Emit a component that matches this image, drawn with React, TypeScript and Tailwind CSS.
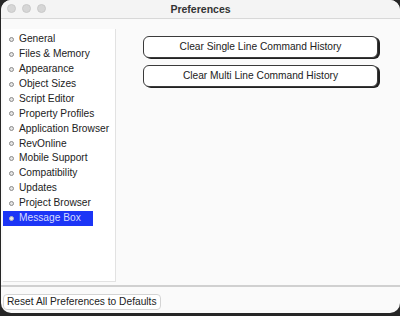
import React from 'react';

const items = [
  'General',
  'Files & Memory',
  'Appearance',
  'Object Sizes',
  'Script Editor',
  'Property Profiles',
  'Application Browser',
  'RevOnline',
  'Mobile Support',
  'Compatibility',
  'Updates',
  'Project Browser',
  'Message Box',
];

const selected = 'Message Box';

export default function App() {
  return (
    <div className="w-[400px] h-[316px] bg-[#262626] overflow-hidden" style={{ fontFamily: '"Liberation Sans", Arial, sans-serif' }}>
      <div className="ml-[1px] w-[399px] h-[313px] rounded-[10px] overflow-hidden bg-[#fafafa] flex flex-col">
        {/* Title bar */}
        <div className="relative h-[19px] bg-[#f4f4f4] border-b border-[#d8d8d8] flex items-center justify-center shrink-0">
          <div className="absolute left-[6px] top-[4px] flex gap-[6px]">
            <span className="w-[9px] h-[9px] rounded-full bg-[#d6d6d6] border border-[#c9c9c9]" />
            <span className="w-[9px] h-[9px] rounded-full bg-[#d6d6d6] border border-[#c9c9c9]" />
            <span className="w-[9px] h-[9px] rounded-full bg-[#d6d6d6] border border-[#c9c9c9]" />
          </div>
          <span className="text-[10.5px] font-bold text-[#333] leading-none">Preferences</span>
        </div>

        {/* Body */}
        <div className="flex flex-1 pt-[10px] pl-[2px]">
          <div className="w-[113px] h-[253px] bg-white border-r border-b border-[#e2e2e2] pt-[3px]">
            {items.map((item) => {
              const active = item === selected;
              return (
                <div
                  key={item}
                  className={`h-[14.9px] w-[90px] flex items-center text-[10.2px] leading-none ${
                    active ? 'bg-[#1c35f6] text-[#d6dcff]' : 'text-[#222]'
                  }`}
                >
                  <span
                    className={`shrink-0 ml-[6px] mr-[5px] w-[5px] h-[5px] rounded-full border ${
                      active ? 'bg-[#e8e8e8] border-[#bbbbbb]' : 'bg-[#e4e4e4] border-[#8a8a8a]'
                    }`}
                  />
                  <span className="whitespace-nowrap">{item}</span>
                </div>
              );
            })}
          </div>

          <div className="flex flex-col gap-[7px] pl-[27px] pt-[7px]">
            <button className="w-[235px] h-[22px] rounded-[6px] bg-white border border-[#3a3a3a] shadow-[2px_1px_0_#222] text-[10.2px] text-[#222] flex items-center justify-center">
              Clear Single Line Command History
            </button>
            <button className="w-[235px] h-[22px] rounded-[6px] bg-white border border-[#3a3a3a] shadow-[2px_1px_0_#222] text-[10.2px] text-[#222] flex items-center justify-center">
              Clear Multi Line Command History
            </button>
          </div>
        </div>

        {/* Footer */}
        <div className="h-[28px] border-t-2 border-[#d0d0d0] shrink-0 pl-[2px] pt-[7px]">
          <button className="h-[16px] px-[3px] rounded-[4px] bg-white border border-[#d4d4d4] text-[10.2px] text-[#222] leading-none flex items-center">
            Reset All Preferences to Defaults
          </button>
        </div>
      </div>
    </div>
  );
}
